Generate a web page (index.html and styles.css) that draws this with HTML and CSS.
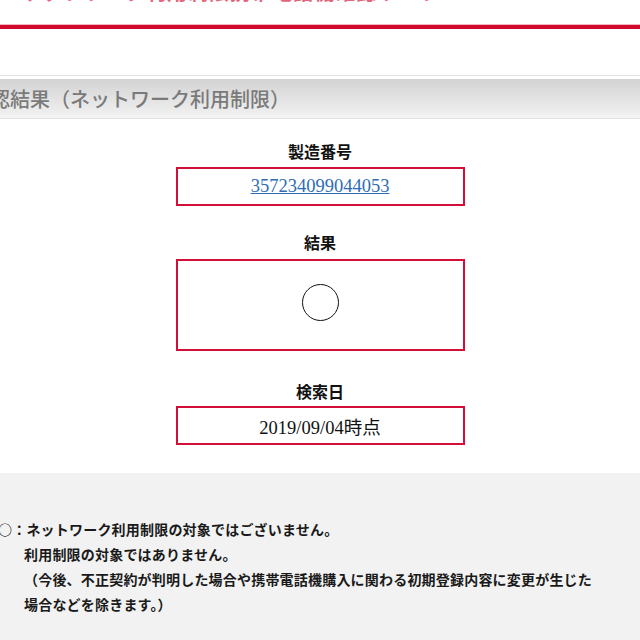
FILE: index.html
```html
<!DOCTYPE html>
<html lang="ja">
<head>
    <meta charset="UTF-8">
    <meta name="viewport" content="width=device-width, initial-scale=1.0">
    <title>ネットワーク利用制限携帯電話機確認サイト</title>
    <link rel="stylesheet" href="styles.css">
</head>
<body>
    <header class="site-head">
        <h1 class="site-title">ネットワーク利用制限携帯電話機確認サイト</h1>
    </header>

    <div class="section-bar">
        <h2 class="section-title">確認結果（ネットワーク利用制限）</h2>
    </div>

    <div class="result">
        <div class="field-label">製造番号</div>
        <div class="field-box box-imei">
            <a href="#" class="imei-link">357234099044053</a>
        </div>

        <div class="field-label label-gap">結果</div>
        <div class="field-box box-status">
            <span class="status-mark"></span>
        </div>

        <div class="field-label label-gap2">検索日</div>
        <div class="field-box box-date">2019/09/04時点</div>
    </div>

    <div class="notes">
        <div class="note-line note-first">○：ネットワーク利用制限の対象ではございません。</div>
        <div class="note-line">利用制限の対象ではありません。</div>
        <div class="note-line note-wrap">（今後、不正契約が判明した場合や携帯電話機購入に関わる初期登録内容に変更が生じた場合などを除きます。）</div>
    </div>
</body>
</html>
```

FILE: styles.css
```css
html, body {
    margin: 0;
    padding: 0;
    overflow: hidden;
}
body {
    width: 640px;
    height: 640px;
    background: #fff;
    font-family: "Liberation Serif", "Noto Sans CJK JP", serif;
}

/* ヘッダー */
.site-head {
    display: flow-root;
    height: 25px;
    border-bottom: 4px solid #cf0a2c;
    box-shadow: 0 -1px 0 #f3b7c2 inset;
}
.site-title {
    margin: -19.5px 0 0 20px;
    font-family: "Noto Sans CJK JP", sans-serif;
    font-size: 20px;
    line-height: 22px;
    font-weight: 700;
    color: #e4647c;
    letter-spacing: 1px;
    white-space: nowrap;
}

/* 見出しバー */
.section-bar {
    margin-top: 46px;
    border-top: 1px solid #e4e4e4;
    border-bottom: 1px solid #e2e2e2;
    padding-top: 3px;
    background: #fff;
}
.section-title {
    margin: 0;
    height: 39px;
    text-indent: -30px;
    background: linear-gradient(#d3d3d3, #ececec 80%, #f4f4f4);
    font-family: "Noto Sans CJK JP", sans-serif;
    font-size: 20px;
    font-weight: 500;
    line-height: 40px;
    color: #7a7a7a;
    white-space: nowrap;
}

/* 結果 */
.result {
    display: flex;
    flex-direction: column;
    align-items: center;
    padding-top: 22px;
}
.field-label {
    height: 24px;
    line-height: 24px;
    margin-bottom: 2px;
    font-size: 16px;
    font-weight: 700;
    color: #111;
}
.label-gap {
    margin-top: 26px;
    margin-bottom: 3px;
}
.label-gap2 {
    margin-top: 30px;
    margin-bottom: 1px;
}
.field-box {
    box-sizing: border-box;
    width: 289px;
    border: 2px solid #d20f38;
    display: flex;
    align-items: center;
    justify-content: center;
    font-size: 18.5px;
    color: #111;
}
.box-imei {
    height: 39px;
}
.box-status {
    height: 92px;
}
.box-date {
    height: 39px;
}
.imei-link {
    color: #2f6db5;
    text-decoration: underline;
}
.status-mark {
    display: block;
    width: 35px;
    height: 35px;
    border: 1.5px solid #111;
    border-radius: 50%;
    margin-top: -6px;
}

/* 注意書き */
.notes {
    margin-top: 28px;
    height: 200px;
    background: #f2f2f2;
    padding: 44px 0 0 24px;
    font-family: "Noto Sans CJK JP", sans-serif;
    font-size: 14px;
    font-weight: 700;
    line-height: 25px;
    letter-spacing: 0.2px;
    color: #1a1a1a;
}
.note-first {
    margin-left: -26px;
}
.note-wrap {
    width: 572px;
}
```
